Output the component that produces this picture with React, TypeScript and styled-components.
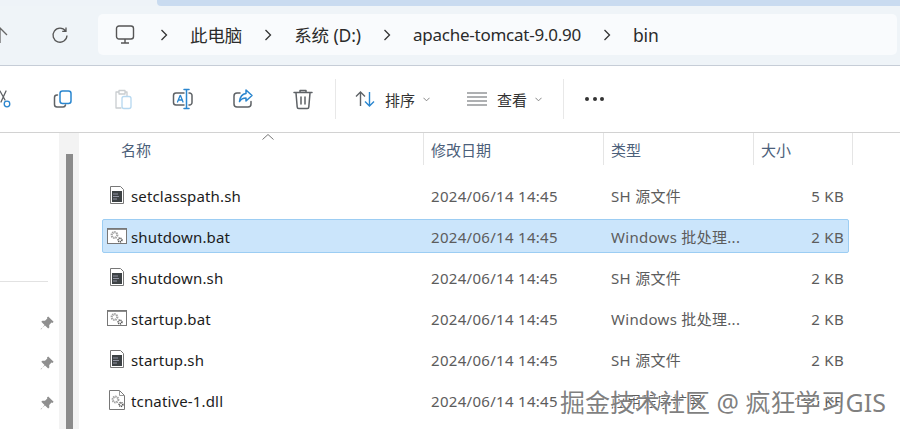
import React from 'react';
import styled, { createGlobalStyle } from 'styled-components';

const FONT = `"Noto Sans", "Noto Sans CJK SC", sans-serif`;
const BLUE = '#2a86cf';
const GREY = '#5e6266';

const files = [
  { name: 'setclasspath.sh', kind: 'sh', type: 'SH 源文件', size: '5 KB' },
  { name: 'shutdown.bat', kind: 'bat', type: 'Windows 批处理...', size: '2 KB', selected: true },
  { name: 'shutdown.sh', kind: 'sh', type: 'SH 源文件', size: '2 KB' },
  { name: 'startup.bat', kind: 'bat', type: 'Windows 批处理...', size: '2 KB' },
  { name: 'startup.sh', kind: 'sh', type: 'SH 源文件', size: '2 KB' },
  { name: 'tcnative-1.dll', kind: 'dll', type: '应用程序扩展', size: '190 KB' },
];

const crumbs = [
  { label: '此电脑' },
  { label: '系统 (D:)' },
  { label: 'apache-tomcat-9.0.90', tight: true },
  { label: 'bin' },
];

const Gears = ({ x, y }: { x: number; y: number }) => (
  <g transform={`translate(${x} ${y})`}>
    <circle cx="3.5" cy="3.5" r="2.8" fill="none" stroke="#a0a0a0" strokeWidth="2.2" strokeDasharray="1.4 .7" />
    <circle cx="9" cy="8.500" r="1.800" fill="none" stroke="#555" strokeWidth="1.700" strokeDasharray="1 .6" />
  </g>
);

const FileIcon = ({ kind }: { kind: string }) => {
  if (kind === 'bat') {
    return (
      <svg width="20" height="16" viewBox="0 0 20 16">
        <rect x=".5" y=".5" width="19" height="15" fill="#fff" stroke="#777" />
        <path d="M1 1h18v1H1z" fill="#8d8d8d" />
        <Gears x={4} y={3.500} />
      </svg>
    );
  }
  if (kind === 'dll') {
    return (
      <svg width="16" height="20" viewBox="0 0 16 20">
        <path d="M.5.5h10l5 5v14H.5z" fill="#fff" stroke="#777" />
        <path d="M10.500.5v5h5" fill="none" stroke="#999" />
        <Gears x={3} y={6} />
      </svg>
    );
  }
  return (
    <svg width="14" height="18" viewBox="0 0 14 18">
      <path d="M.5.5h10l3 3v14H.5z" fill="#fff" stroke="#777" />
      <rect x="2" y="5" width="10" height="11" fill="#3d4245" />
      <path d="M3 8h5M3 10.500h6M3 13h4" stroke="#aab" strokeWidth=".8" />
    </svg>
  );
};

const ToolIcon = ({ children }: { children: React.ReactNode }) => (
  <svg width="24" height="24" viewBox="0 0 24 24" fill="none" strokeWidth="1.300" strokeLinecap="round" strokeLinejoin="round">
    {children}
  </svg>
);

const Chevron = () => (
  <svg width="8" height="12" viewBox="0 0 8 12" fill="none" stroke="#333" strokeWidth="1.300">
    <path d="M1.500 1l5 5-5 5" />
  </svg>
);

const Caret = () => (
  <CaretIcon viewBox="0 0 8 5" fill="none" stroke="#777" strokeWidth="1">
    <path d="M.5.5L4 4 7.500.5" />
  </CaretIcon>
);

const Pin = () => (
  <svg width="14" height="14" viewBox="0 0 14 14" fill="#8f8f8f">
    <path d="M8.200.4l5.400 5.400-1.100 1.100-1-.3-2.300 2.300.1 2.600-1.100 1.100L4.500 9 1 13.400.6 13 5 9.500 1.300 5.800l1.100-1.100 2.600.1 2.300-2.300-.3-1z" />
  </svg>
);

const App: React.FC = () => (
  <Page>
    <GlobalStyle />
    <TabStrip>
      <ActiveTab />
    </TabStrip>
    <NavBar>
      <NavButtons>
        <svg width="18" height="20" viewBox="0 0 18 20" fill="none" stroke="#666" strokeWidth="1.300">
          <path d="M9 18V3M2 10l7-7 7 7" />
        </svg>
        <svg width="18" height="18" viewBox="0 0 18 18" fill="none" stroke="#555" strokeWidth="1.300">
          <path d="M14.600 5A7 7 0 1 0 16 9.500M15 1.500V5.300h-3.800" />
        </svg>
      </NavButtons>
      <AddressBar>
        <svg width="20" height="20" viewBox="0 0 20 20" fill="none" stroke="#555" strokeWidth="1.400">
          <rect x="1.500" y="1" width="17" height="13" rx="2.500" />
          <path d="M10 14v3.500M6 18h8" />
        </svg>
        <Crumbs>
          {crumbs.map((c) => (
            <React.Fragment key={c.label}>
              <Chevron />
              <Crumb $tight={c.tight}>{c.label}</Crumb>
            </React.Fragment>
          ))}
        </Crumbs>
      </AddressBar>
    </NavBar>
    <Toolbar>
      <IconGroup>
        <ToolIcon>
          <path d="M15 4l-5 11M9 4l5 9" stroke={GREY} />
          <circle cx="16" cy="17" r="2.800" stroke={BLUE} />
        </ToolIcon>
        <ToolIcon>
          <rect x="9" y="4" width="11" height="12.500" rx="2.500" stroke={BLUE} strokeWidth="1.500" />
          <path d="M6.500 8H6a2.500 2.500 0 0 0-2.500 2.500v7A2.500 2.500 0 0 0 6 20h6a2.500 2.500 0 0 0 2.500-2" stroke={GREY} strokeWidth="1.500" />
        </ToolIcon>
        <ToolIcon>
          <path d="M8 5H5v16h5M14 5h2v4M8 3.500h6V7H8z" stroke="#c9cdd0" />
          <rect x="11" y="9.500" width="9" height="12" rx="2" stroke="#b6d8f0" />
        </ToolIcon>
        <ToolIcon>
          <path d="M13 6H5a2.500 2.500 0 0 0-2.500 2.500v7A2.500 2.500 0 0 0 5 18h8M18 6h.5A2.500 2.500 0 0 1 21 8.500v7a2.500 2.500 0 0 1-2.500 2.500H18" stroke={GREY} strokeWidth="1.500" />
          <path d="M13 2.500h5M13 21.500h5M15.500 2.500v19" stroke={BLUE} strokeWidth="1.500" />
          <path d="M6.500 15l2.600-6.500h.4L12 15M7.500 13h4" stroke={BLUE} />
        </ToolIcon>
        <ToolIcon>
          <path d="M20 14.500V17a3 3 0 0 1-3 3H6a3 3 0 0 1-3-3V9a3 3 0 0 1 3-3h3" stroke={GREY} strokeWidth="1.500" />
          <path d="M15 3l6 5.500-6 5.500v-3c-3 0-5 1-6.500 3.500C9 10 11 7 15 6.500z" stroke={BLUE} strokeWidth="1.500" />
        </ToolIcon>
        <ToolIcon>
          <path d="M3 5.500h18M9 5V3.500h6V5M5 6l1.200 14a1.500 1.500 0 0 0 1.500 1.500h8.600a1.500 1.500 0 0 0 1.500-1.500L19 6M10 10v7M14 10v7" stroke={GREY} strokeWidth="1.500" />
        </ToolIcon>
      </IconGroup>
      <Divider />
      <MenuButton>
        <svg width="20" height="18" viewBox="0 0 20 18" fill="none" strokeWidth="1.400">
          <path d="M5.500 16V2M1 6.500L5.500 2 10 6.500" stroke={GREY} />
          <path d="M14.500 2v14M10 11.500l4.500 4.500 4.500-4.500" stroke={BLUE} />
        </svg>
        <MenuLabel>排序</MenuLabel>
        <Caret />
      </MenuButton>
      <ViewButton>
        <svg width="20" height="14" viewBox="0 0 20 14" stroke={GREY} strokeWidth="1.100">
          <path d="M0 1h20M0 5h20M0 9h20M0 13h20" />
        </svg>
        <MenuLabel>查看</MenuLabel>
        <Caret />
      </ViewButton>
      <Divider />
      <Dots>
        <i />
        <i />
        <i />
      </Dots>
    </Toolbar>
    <Body>
      <Sidebar>
        <SideRule />
        <Pins>
          <Pin />
          <Pin />
          <Pin />
        </Pins>
      </Sidebar>
      <Track>
        <Thumb />
      </Track>
      <Content>
        <HeaderRow>
          <NameHead>
            名称
            <SortArrow viewBox="0 0 12 6" fill="none" stroke="#777" strokeWidth="1">
              <path d="M.5 5.500L6 .5l5.500 5" />
            </SortArrow>
          </NameHead>
          <HeadCell>修改日期</HeadCell>
          <HeadCell>类型</HeadCell>
          <LastHeadCell>大小</LastHeadCell>
        </HeaderRow>
        <List>
          {files.map((f) => (
            <Row key={f.name} $selected={f.selected}>
              <NameCell>
                <IconSlot>
                  <FileIcon kind={f.kind} />
                </IconSlot>
                {f.name}
              </NameCell>
              <MetaCell>2024/06/14 14:45</MetaCell>
              <MetaCell>{f.type}</MetaCell>
              <SizeCell>{f.size}</SizeCell>
            </Row>
          ))}
        </List>
      </Content>
    </Body>
    <Watermark>掘金技术社区 @ 疯狂学习GIS</Watermark>
  </Page>
);

const GlobalStyle = createGlobalStyle`
  html, body { margin: 0; padding: 0; background: #fff; }
  * { box-sizing: border-box; }
`;

const Page = styled.div`
  position: relative;
  width: 900px;
  height: 429px;
  overflow: hidden;
  display: flex;
  flex-direction: column;
  font-family: ${FONT};
  background: #fff;
`;

const TabStrip = styled.div`
  height: 6px;
  padding-left: 157px;
  background: #eef3f8;
`;

const ActiveTab = styled.div`
  height: 100%;
  background: #c9dbf0;
  border-bottom-left-radius: 4px;
`;

const NavBar = styled.div`
  height: 60px;
  display: flex;
  align-items: flex-start;
  padding: 8px 3px 0 0;
  background: #eff4f8;
  border-bottom: 1px solid #c6cdd7;
`;

const NavButtons = styled.div`
  width: 98px;
  height: 41px;
  display: flex;
  align-items: center;
  gap: 42px;
  margin: 0 9px 0 -9px;
  flex-shrink: 0;
`;

const AddressBar = styled.div`
  flex: 1;
  height: 41px;
  display: flex;
  align-items: center;
  padding-left: 17px;
  background: #f9fbfd;
  border-radius: 5px;
`;

const Crumbs = styled.div`
  display: flex;
  align-items: center;
  gap: 22px;
  margin-left: 25px;
`;

const Crumb = styled.span<{ $tight?: boolean }>`
  font-size: ${(p) => (p.$tight ? '17px' : '17.5px')};
  letter-spacing: ${(p) => (p.$tight ? '-0.25px' : '-0.1px')};
  color: #2b2b2b;
  white-space: nowrap;
`;

const Toolbar = styled.div`
  height: 67px;
  display: flex;
  align-items: center;
  border-bottom: 1px solid #d2d2d2;
  background: #fff;
`;

const IconGroup = styled.div`
  display: flex;
  gap: 36px;
  margin-left: -9px;
  width: 344px;
  flex-shrink: 0;
`;

const Divider = styled.div`
  width: 1px;
  height: 40px;
  background: #e8e8e8;
  flex-shrink: 0;
`;

const MenuButton = styled.div`
  display: flex;
  align-items: center;
  margin-left: 19px;
  width: 112px;
  gap: 10px;
  flex-shrink: 0;
`;

const ViewButton = styled(MenuButton)`
  margin-left: 0;
  width: 96px;
`;

const MenuLabel = styled.span`
  font-size: 15px;
  color: #333;
  margin-right: -2px;
`;

const CaretIcon = styled.svg`
  width: 7px;
  height: 5px;
`;

const Dots = styled.div`
  display: flex;
  gap: 3.5px;
  margin-left: 21px;
  i {
    width: 4px;
    height: 4px;
    border-radius: 50%;
    background: #333;
  }
`;

const Body = styled.div`
  flex: 1;
  display: flex;
  min-height: 0;
`;

const Sidebar = styled.div`
  width: 59px;
  flex-shrink: 0;
  padding-top: 148px;
`;

const SideRule = styled.div`
  width: 48px;
  height: 1px;
  background: #e2e2e2;
`;

const Pins = styled.div`
  display: flex;
  flex-direction: column;
  align-items: flex-end;
  gap: 26px;
  padding: 34px 5px 0 0;
`;

const Track = styled.div`
  width: 20px;
  flex-shrink: 0;
  padding: 21px 6px 0 7px;
  background: #f3f3f3;
`;

const Thumb = styled.div`
  height: 100%;
  background: #8b8b8b;
`;

const Content = styled.div`
  flex: 1;
  padding-left: 23px;
`;

const HeaderRow = styled.div`
  height: 32px;
  display: grid;
  grid-template-columns: 321px 180px 150px 100px;
`;

const HeadCell = styled.div`
  display: flex;
  align-items: center;
  padding-left: 7px;
  border-left: 1px solid #e5e5e5;
  font-size: 15px;
  color: #4c607a;
`;

const LastHeadCell = styled(HeadCell)`
  border-right: 1px solid #e5e5e5;
`;

const NameHead = styled(HeadCell)`
  position: relative;
  border-left: 0;
  padding-left: 19px;
`;

const SortArrow = styled.svg`
  position: absolute;
  left: 160px;
  top: 1px;
  width: 12px;
  height: 6px;
`;

const List = styled.div`
  display: flex;
  flex-direction: column;
  gap: 7px;
  padding-top: 13px;
`;

const Row = styled.div<{ $selected?: boolean }>`
  width: 747px;
  height: 34px;
  padding-top: 1px;
  display: grid;
  grid-template-columns: 321px 180px 150px 96px;
  align-items: center;
  background: ${(p) => (p.$selected ? '#cbe5fb' : 'transparent')};
  border: 1px solid ${(p) => (p.$selected ? '#9ccdf3' : 'transparent')};
  border-radius: 2px;
  font-size: 15px;
`;

const NameCell = styled.div`
  display: flex;
  align-items: center;
  color: #1c1c1c;
  letter-spacing: 0.15px;
  white-space: nowrap;
`;

const IconSlot = styled.div`
  width: 28px;
  margin-top: -2px;
  display: flex;
  justify-content: center;
`;

const MetaCell = styled.div`
  padding-left: 7px;
  color: #5c5c5c;
  letter-spacing: 0.3px;
  white-space: nowrap;
`;

const SizeCell = styled(MetaCell)`
  padding: 0 6px 0 0;
  text-align: right;
`;

const Watermark = styled.div`
  position: absolute;
  left: 560px;
  top: 383px;
  font-size: 25px;
  color: rgba(105, 105, 105, 0.85);
  text-shadow: 1px 1px 0 #fff, -1px 0 0 rgba(255, 255, 255, 0.6);
  white-space: nowrap;
`;

export default App;
